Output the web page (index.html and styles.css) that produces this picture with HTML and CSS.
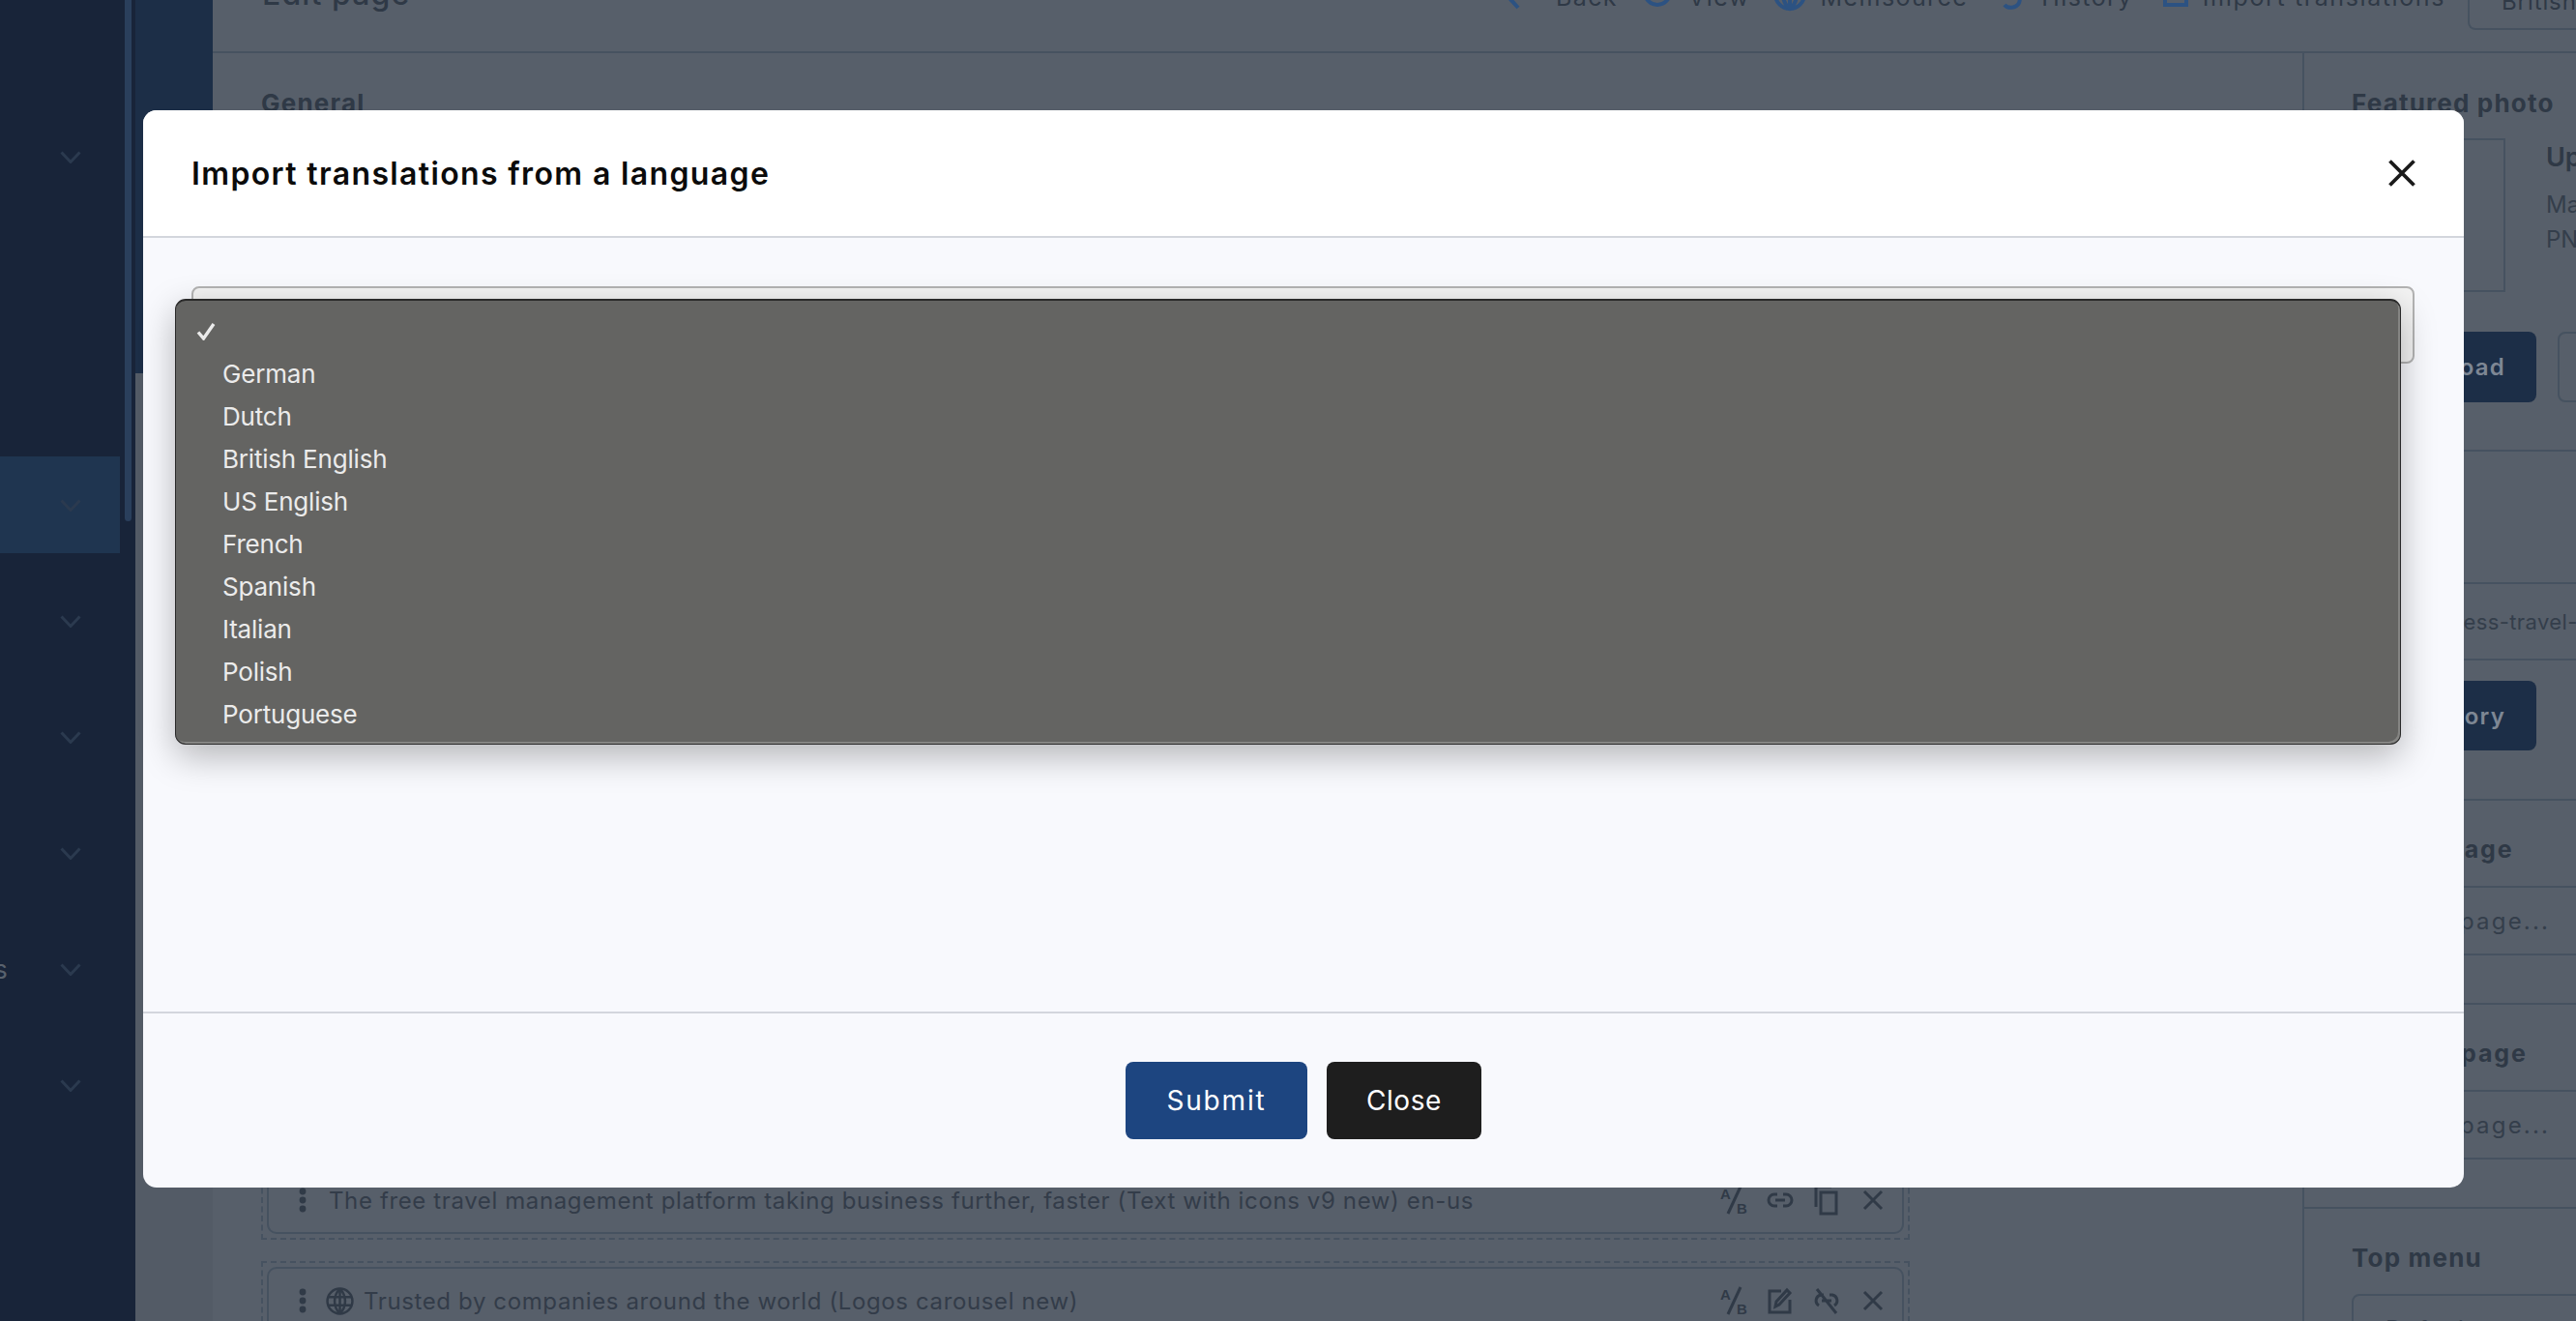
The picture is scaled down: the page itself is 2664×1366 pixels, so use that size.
FILE: index.html
```html
<!DOCTYPE html>
<html lang="en">
<head>
<meta charset="utf-8">
<title>Edit page</title>
<link rel="stylesheet" href="styles.css">
</head>
<body>
<div class="app">
  <aside class="sidebar">
    <nav class="nav">
      <div class="nav-row"><svg class="chev" viewBox="0 0 22 13"><path d="M1.5 1.5 11 11.5 20.5 1.5"/></svg></div>
      <div class="nav-row"></div>
      <div class="nav-row"></div>
      <div class="nav-row active"><svg class="chev" viewBox="0 0 22 13"><path d="M1.5 1.5 11 11.5 20.5 1.5"/></svg></div>
      <div class="nav-row"><svg class="chev" viewBox="0 0 22 13"><path d="M1.5 1.5 11 11.5 20.5 1.5"/></svg></div>
      <div class="nav-row"><svg class="chev" viewBox="0 0 22 13"><path d="M1.5 1.5 11 11.5 20.5 1.5"/></svg></div>
      <div class="nav-row"><svg class="chev" viewBox="0 0 22 13"><path d="M1.5 1.5 11 11.5 20.5 1.5"/></svg></div>
      <div class="nav-row"><span class="nav-label">s</span><svg class="chev" viewBox="0 0 22 13"><path d="M1.5 1.5 11 11.5 20.5 1.5"/></svg></div>
      <div class="nav-row"><svg class="chev" viewBox="0 0 22 13"><path d="M1.5 1.5 11 11.5 20.5 1.5"/></svg></div>
    </nav>
    <div class="thumb"></div>
  </aside>
  <div class="subnav"><div class="subnav-top"></div></div>
  <main class="main">
    <header class="topbar">
      <h1 class="page-title">Edit page</h1>
      <div class="actions">
        <a class="action act-back"><svg class="act-icon" viewBox="0 0 28 28"><path d="M18 3 8 14l10 11"/></svg>Back</a>
        <a class="action act-view"><svg class="act-icon" viewBox="0 0 28 28"><circle cx="14" cy="9" r="13"/></svg>View</a>
        <a class="action act-mem"><svg class="act-icon" viewBox="0 0 28 28"><circle cx="14" cy="11" r="15"/><path d="M-1 11h30M14-4v30M7 11c0 8 3 12 7 15 4-3 7-7 7-15"/></svg>Memsource</a>
        <a class="action act-his"><svg class="act-icon" viewBox="0 0 28 28"><path d="M8 22c3 4 12 4 15-2 2-5 0-10-4-13"/></svg>History</a>
        <a class="action act-imp"><svg class="act-icon" viewBox="0 0 28 28"><path d="M3 0v22h22V0"/></svg>Import translations</a>
      </div>
      <div class="lang-box">British English</div>
    </header>
    <div class="content">
      <section class="editor">
        <h2 class="section-title">General</h2>
        <div class="block first">
          <div class="block-inner">
            <svg class="kebab" viewBox="0 0 8 26"><circle cx="4" cy="4" r="3.4"/><circle cx="4" cy="13" r="3.4"/><circle cx="4" cy="22" r="3.4"/></svg>
            <span class="block-text">The free travel management platform taking business further, faster (Text with icons v9 new) en-us</span>
            <div class="tools">
              <svg class="tool" viewBox="0 0 28 28"><text x="0" y="13" class="ab">A</text><path d="M21 0 8 28"/><text x="17" y="28" class="ab">B</text></svg>
              <svg class="tool" viewBox="0 0 28 28"><path d="M11 8H8a6 6 0 0 0 0 12h3M17 8h3a6 6 0 0 1 0 12h-3M9 14h10"/></svg>
              <svg class="tool" viewBox="0 0 28 28"><path d="M3 21V0h16M8 6h16v22H8z"/></svg>
              <svg class="tool" viewBox="0 0 28 28"><path d="M5 5l18 18M23 5 5 23"/></svg>
            </div>
          </div>
        </div>
        <div class="block">
          <div class="block-inner">
            <svg class="kebab" viewBox="0 0 8 26"><circle cx="4" cy="4" r="3.4"/><circle cx="4" cy="13" r="3.4"/><circle cx="4" cy="22" r="3.4"/></svg>
            <svg class="globe" viewBox="0 0 28 28"><circle cx="14" cy="14" r="12.5"/><path d="M2 10h24M2 18h24M14 1.500v25M14 1.500c-7 7-7 18 0 25M14 1.500c7 7 7 18 0 25"/></svg>
            <span class="block-text">Trusted by companies around the world (Logos carousel new)</span>
            <div class="tools">
              <svg class="tool" viewBox="0 0 28 28"><text x="0" y="13" class="ab">A</text><path d="M21 0 8 28"/><text x="17" y="28" class="ab">B</text></svg>
              <svg class="tool" viewBox="0 0 28 28"><path d="M15 4H3v22h21V13M9 20l1-5L21 3l3 3-11 12z"/></svg>
              <svg class="tool" viewBox="0 0 28 28"><path d="M11 8H8a6 6 0 0 0-2 11M17 8h3a6 6 0 0 1 2 11M9 14h10M4 2l20 25"/></svg>
              <svg class="tool" viewBox="0 0 28 28"><path d="M5 5l18 18M23 5 5 23"/></svg>
            </div>
          </div>
        </div>
      </section>
      <aside class="panel">
        <section class="pane pane-photo">
          <h2 class="section-title">Featured photo</h2>
          <div class="photo-row">
            <div class="photo-box"></div>
            <div class="photo-info">
              <div class="photo-head">Upload photo</div>
              <div class="photo-note">Max size 2MB</div>
              <div class="photo-note">PNG or JPG</div>
            </div>
          </div>
          <div class="btn-row">
            <div class="dark-btn">Upload</div>
            <div class="ghost-btn"></div>
          </div>
        </section>
        <section class="pane pane-slug">
          <div class="field field-slug">business-travel-management</div>
          <div class="dark-btn btn-hist">Category</div>
        </section>
        <section class="pane pane-page">
          <h3 class="pane-label">Parent page</h3>
          <div class="field">Select page...</div>
        </section>
        <section class="pane pane-page">
          <h3 class="pane-label">Related page</h3>
          <div class="field">Select page...</div>
        </section>
        <section class="pane pane-menu">
          <h2 class="section-title">Top menu</h2>
          <div class="field field-menu">Default</div>
        </section>
      </aside>
    </div>
  </main>
</div>

<div class="modal">
  <div class="modal-head">
    <h2 class="modal-title">Import translations from a language</h2>
    <svg class="modal-x" viewBox="0 0 28 28"><path d="M1.500 1.500l25 25M26.500 1.500l-25 25"/></svg>
  </div>
  <div class="modal-body">
    <div class="select"></div>
  </div>
  <div class="modal-foot">
    <button class="btn btn-submit">Submit</button>
    <button class="btn btn-close">Close</button>
  </div>
  <ul class="dropdown">
    <li class="opt"><svg class="check" viewBox="0 0 20 19"><path d="M2 10.500 7.500 17 18 2"/></svg></li>
    <li class="opt">German</li>
    <li class="opt">Dutch</li>
    <li class="opt">British English</li>
    <li class="opt">US English</li>
    <li class="opt">French</li>
    <li class="opt">Spanish</li>
    <li class="opt">Italian</li>
    <li class="opt">Polish</li>
    <li class="opt">Portuguese</li>
  </ul>
</div>
</body>
</html>
```
FILE: styles.css
```css
* { box-sizing: border-box; }
html, body { margin: 0; height: 100%; overflow: hidden; }
body { font-family: Inter, "Noto Sans", sans-serif; background: #575f6a; color: #2f3946; }

.app { display: flex; height: 1366px; overflow: hidden; }

.sidebar { width: 140px; flex: none; background: #182439; display: flex; align-items: flex-start; }
.nav { width: 129px; padding: 112px 5px 0 0; }
.nav-row { height: 100px; margin-bottom: 20px; display: flex; align-items: center; justify-content: flex-end; padding-right: 40px; position: relative; }
.nav-row.active { background: #1f3550; }
.nav-label { position: absolute; left: -6px; font-size: 26px; color: #59626e; }
.chev { width: 22px; height: 13px; }
.chev path { fill: none; stroke: #2b3a4f; stroke-width: 3; }
.thumb { width: 7px; height: 539px; background: #2a3f5c; border-radius: 0 0 4px 4px; }

.subnav { width: 80px; flex: none; background: #535b66; }
.subnav-top { height: 386px; background: #1c2e47; }

.main { flex: 1; min-width: 0; display: flex; flex-direction: column; background: #575f6a; }

.topbar { height: 55px; flex: none; border-bottom: 2px solid #465260; display: flex; padding-left: 51px; position: relative; white-space: nowrap; }
.page-title { margin: -26px 0 0; font-size: 32px; line-height: 40px; font-weight: 500; letter-spacing: 1.1px; color: #2f3946; height: 40px; }
.actions { margin-left: auto; display: flex; align-items: center; height: 40px; margin-top: -23px; font-size: 25px; color: #2f3946; letter-spacing: 1.42px; }
.action { display: flex; align-items: center; }
.act-icon { width: 28px; height: 28px; overflow: visible; }
.act-icon path, .act-icon circle { fill: none; stroke: #2c5282; stroke-width: 4; }
.act-back { margin-right: 27px; gap: 29px; }
.act-view { margin-right: 27px; gap: 18px; }
.act-mem { margin-right: 30px; gap: 18px; }
.act-his { margin-right: 30px; gap: 18px; }
.act-imp { margin-right: 23px; gap: 14px; letter-spacing: 1.6px; }
.lang-box { width: 112px; height: 60px; margin-top: -29px; border: 2px solid #465260; border-right: 0; border-radius: 8px 0 0 8px; padding: 14px 0 0 33px; font-size: 24px; overflow: hidden; flex: none; letter-spacing: .9px; }

.content { flex: 1; min-height: 0; display: flex; }

.editor { width: 2161px; flex: none; padding: 34px 49px 0 50px; overflow: hidden; background: #575f6a; }
.section-title { margin: 0; font-size: 26px; line-height: 36px; font-weight: 700; color: #2f3946; letter-spacing: 1.2px; }
.block { height: 82px; width: 1705px; border: 2px dashed #465260; padding: 4px; margin-bottom: 22px; }
.block.first { margin-top: 1075px; }
.block-inner { height: 100%; border: 2px solid #465260; border-radius: 10px; display: flex; align-items: center; padding: 0 16px 0 31px; margin: 0; }
.kebab { width: 8px; height: 26px; fill: #303a47; flex: none; margin-right: 23px; }
.globe { width: 29px; height: 29px; flex: none; margin: 0 10px 0 -3px; }
.globe circle, .globe path { fill: none; stroke: #303a47; stroke-width: 2.4; }
.block-text { font-size: 24px; letter-spacing: .62px; color: #333c49; white-space: nowrap; }
.tools { margin-left: auto; display: flex; gap: 20px; }
.tool { width: 28px; height: 28px; overflow: visible; }
.tool path { fill: none; stroke: #303a47; stroke-width: 3; }
.ab { font-family: "Liberation Sans", sans-serif; font-size: 15px; font-weight: 700; fill: #303a47; }

.panel { width: 400px; flex: none; border-left: 2px solid #465260; overflow: hidden; }
.pane { border-bottom: 2px solid #465260; padding-left: 49px; width: 400px; }
.pane-photo { height: 412px; padding-top: 34px; }
.photo-row { display: flex; margin-top: 18px; }
.photo-box { width: 159px; height: 159px; border: 2px solid #465260; flex: none; }
.photo-info { margin-left: 42px; white-space: nowrap; }
.photo-head { font-size: 27px; font-weight: 600; line-height: 40px; }
.photo-note { font-size: 24px; line-height: 36px; color: #343e4b; }
.photo-head + .photo-note { margin-top: 11px; }
.btn-row { display: flex; gap: 22px; margin-top: 41px; }
.dark-btn { height: 73px; width: 191px; border-radius: 8px; background: #1c2e47; color: #7e8794; font-size: 24px; font-weight: 600; letter-spacing: 1.2px; display: flex; align-items: center; justify-content: flex-end; padding-right: 32px; flex: none; }
.ghost-btn { height: 73px; width: 120px; border: 2px solid #465260; border-radius: 8px; flex: none; }
.pane-slug { height: 361px; padding-top: 135px; }
.field { height: 72px; width: 500px; border-top: 2px solid #465260; border-bottom: 2px solid #465260; font-size: 24px; letter-spacing: 2.2px; color: #343e4b; display: flex; align-items: center; white-space: nowrap; padding-left: 19px; }
.field-slug { height: 81px; padding-left: 57px; margin-bottom: 21px; font-size: 22px; letter-spacing: .4px; }
.btn-hist { height: 72px; }
.pane-page { height: 211px; padding-top: 30px; }
.pane-label { margin: 0 0 18px; font-size: 25px; line-height: 40px; font-weight: 700; letter-spacing: 1.9px; white-space: nowrap; }
.pane-menu { border-bottom: 0; padding-top: 33px; }
.field-menu { height: 73px; border: 2px solid #465260; border-radius: 8px 0 0 8px; margin-top: 19px; padding-left: 33px; letter-spacing: 1.5px; }

.modal { position: absolute; left: 148px; top: 114px; width: 2400px; height: 1114px; background: #f8f9fd; border-radius: 14px; display: flex; flex-direction: column; overflow: visible; }
.modal-head { height: 132px; flex: none; background: #fff; border-radius: 14px 14px 0 0; border-bottom: 2px solid #d3d6dd; display: flex; align-items: center; justify-content: space-between; padding: 0 50px; }
.modal-title { margin: 0; font-size: 32px; font-weight: 600; letter-spacing: 1.36px; color: #0b0b0b; }
.modal-x { width: 28px; height: 28px; }
.modal-x path { fill: none; stroke: #1a1a1a; stroke-width: 3.8; }
.modal-body { height: 800px; flex: none; padding: 50px 51px 0 50px; }
.select { height: 80px; border: 2px solid #b3b3b3; border-radius: 8px; background: #f3f3f3; }
.modal-foot { flex: 1; border-top: 2px solid #d3d6dd; display: flex; align-items: center; justify-content: center; gap: 20px; }
.btn { height: 80px; border: 0; border-radius: 8px; color: #fff; font-family: Inter, "Noto Sans", sans-serif; font-size: 28px; padding: 0; }
.btn-submit { width: 188px; background: #1d4580; letter-spacing: 1.85px; }
.btn-close { width: 160px; background: #1e1e1e; letter-spacing: .6px; }

.dropdown { position: absolute; left: 33px; top: 195px; width: 2302px; height: 461px; margin: 0; padding: 10px 0 0; list-style: none; background: #646462; border: 1px solid #2a2a2a; border-top-width: 2px; box-shadow: inset -2px -2px 0 #858583, 0 12px 36px rgba(0, 0, 0, .28); border-radius: 11px; }
.opt { height: 44px; padding-left: 48px; font-size: 26px; line-height: 44px; letter-spacing: -.2px; color: #ebebeb; position: relative; }
.check { position: absolute; left: 21px; top: 12px; width: 20px; height: 19px; }
.check path { fill: none; stroke: #ebebeb; stroke-width: 3.4; }
```
